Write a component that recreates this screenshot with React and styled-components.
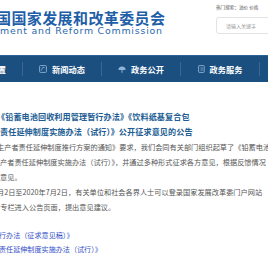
import styled, { createGlobalStyle } from "styled-components";

const GlobalStyle = createGlobalStyle`
  html, body {
    margin: 0;
    padding: 0;
    background: #ffffff;
    overflow: hidden;
  }
  body {
    font-family: "Noto Sans CJK SC", "Noto Sans", sans-serif;
  }
`;

const Page = styled.div`
  width: 268px;
  height: 273px;
  overflow: hidden;
  background: #ffffff;
`;

const Header = styled.div`
  display: flex;
  height: 55px;
`;

const Logo = styled.div`
  width: 220px;
  flex-shrink: 0;
  margin-left: -4px;
  padding-top: 9px;
  color: #1f5fa8;
  white-space: nowrap;
`;

const LogoCn = styled.div`
  font-size: 15px;
  line-height: 17px;
  font-weight: 700;
  letter-spacing: 0.4px;
`;

const LogoEn = styled.div`
  margin-left: 4px;
  font-family: "DejaVu Sans", sans-serif;
  font-size: 9.4px;
  line-height: 10px;
  letter-spacing: 0.8px;
  color: #2a68ad;
`;

const SearchArea = styled.div`
  flex: 1;
  display: flex;
  flex-direction: column;
  padding-top: 4px;
  min-width: 0;
`;

const HotWords = styled.div`
  font-size: 4.6px;
  line-height: 6px;
  color: #555555;
  white-space: nowrap;
`;

const SearchBox = styled.div`
  margin-top: 7px;
  width: 80px;
  height: 17px;
  border: 1px solid #e3e3e3;
  border-radius: 3px;
  display: flex;
  align-items: center;
  padding-left: 9px;
  font-size: 5px;
  color: #9a9a9a;
  box-sizing: border-box;
  white-space: nowrap;
`;

const Nav = styled.div`
  display: flex;
  align-items: center;
  height: 27px;
  margin-left: -56px;
  background: #1b4f80;
  border-top: 1px solid #2b6398;
  box-sizing: border-box;
`;

const NavItem = styled.div`
  width: 78px;
  flex-shrink: 0;
  display: flex;
  align-items: center;
  justify-content: center;
  gap: 5px;
  color: #ffffff;
  font-size: 8.2px;
  font-weight: 700;
  white-space: nowrap;
`;

const NavSep = styled.div`
  width: 1px;
  height: 14px;
  flex-shrink: 0;
  background: rgba(255, 255, 255, 0.14);
`;

const Article = styled.div`
  margin-top: 27px;
`;

const Title = styled.div`
  font-size: 8.1px;
  line-height: 15px;
  font-weight: 700;
  color: #215c93;
  letter-spacing: 0.1px;
`;

const Para = styled.div`
  margin-top: 1px;
  font-size: 7.2px;
  line-height: 15px;
  color: #555555;
`;

const Line = styled.div`
  white-space: nowrap;
  margin-left: ${(p) => p.$shift || 0}px;
`;

const Links = styled.div`
  margin-top: 13px;
  font-size: 7.1px;
  line-height: 14px;
`;

const LinkLine = styled.a`
  display: block;
  white-space: nowrap;
  color: #3450c8;
  text-decoration: none;
  margin-left: ${(p) => p.$shift || 0}px;
`;

const iconColor = "#8fb3d4";

const NewsIcon = () => (
  <svg width="8" height="8" viewBox="0 0 8 8">
    <rect x="0.6" y="0.6" width="6.8" height="6.8" rx="0.8" fill="none" stroke={iconColor} strokeWidth="0.9" />
    <path d="M2.2 5.6 L3.6 2.6 L5.8 2.6" fill="none" stroke={iconColor} strokeWidth="0.8" />
  </svg>
);

const OpenIcon = () => (
  <svg width="8" height="8" viewBox="0 0 8 8">
    <path d="M0.4 5 A3.6 3.6 0 0 1 7.6 5 Z" fill={iconColor} />
    <rect x="3.5" y="4.6" width="1" height="3.2" fill={iconColor} />
  </svg>
);

const ServiceIcon = () => (
  <svg width="7" height="8" viewBox="0 0 7 8">
    <rect x="0.6" y="0.6" width="5.6" height="6.8" rx="0.6" fill="none" stroke={iconColor} strokeWidth="0.9" />
    <path d="M2.4 3 H5 M2.4 5 H5" stroke={iconColor} strokeWidth="0.8" />
  </svg>
);

const OrgIcon = () => (
  <svg width="8" height="8" viewBox="0 0 8 8">
    <circle cx="4" cy="4" r="3.4" fill="none" stroke={iconColor} strokeWidth="0.9" />
  </svg>
);

const TalkIcon = () => (
  <svg width="8" height="8" viewBox="0 0 8 8">
    <rect x="0.6" y="1" width="6.8" height="5" rx="1" fill="none" stroke={iconColor} strokeWidth="0.9" />
  </svg>
);

const navItems = [
  { label: "机构设置", icon: <OrgIcon /> },
  { label: "新闻动态", icon: <NewsIcon /> },
  { label: "政务公开", icon: <OpenIcon /> },
  { label: "政务服务", icon: <ServiceIcon /> },
  { label: "互动交流", icon: <TalkIcon /> },
];

const titleLines = [
  { text: "《铅蓄电池回收利用管理暂行办法》《饮料纸基复合包", shift: -3 },
  { text: "责任延伸制度实施办法（试行）》公开征求意见的公告", shift: 0 },
];

const paraLines = [
  { text: "生产者责任延伸制度推行方案的通知》要求，我们会同有关部门组织起草了《铅蓄电池", shift: -3 },
  { text: "产者责任延伸制度实施办法（试行）》，并通过多种形式征求各方意见，根据反馈情况", shift: 0 },
  { text: "意见。", shift: 0 },
  { text: "月2日至2020年7月2日，有关单位和社会各界人士可以登录国家发展改革委门户网站", shift: -3 },
  { text: "”专栏进入公告页面，提出意见建议。", shift: -7 },
];

export default function App() {
  return (
    <Page>
      <GlobalStyle />
      <Header>
        <Logo>
          <LogoCn>国国家发展和改革委员会</LogoCn>
          <LogoEn>ment and Reform Commission</LogoEn>
        </Logo>
        <SearchArea>
          <HotWords>热门搜索：油价 价格</HotWords>
          <SearchBox>请输入关键字</SearchBox>
        </SearchArea>
      </Header>

      <Nav>
        {navItems.map((item) => (
          <>
            <NavItem key={item.label}>
              {item.icon}
              <span>{item.label}</span>
            </NavItem>
            <NavSep />
          </>
        ))}
      </Nav>

      <Article>
        <Title>
          {titleLines.map((l, i) => (
            <Line key={i} $shift={l.shift}>
              {l.text}
            </Line>
          ))}
        </Title>
        <Para>
          {paraLines.map((l, i) => (
            <Line key={i} $shift={l.shift}>
              {l.text}
            </Line>
          ))}
        </Para>
        <Links>
          <LinkLine href="#" $shift={-1}>行办法（征求意见稿）》</LinkLine>
          <LinkLine href="#" $shift={-1}>责任延伸制度实施办法（试行）》</LinkLine>
        </Links>
      </Article>
    </Page>
  );
}
